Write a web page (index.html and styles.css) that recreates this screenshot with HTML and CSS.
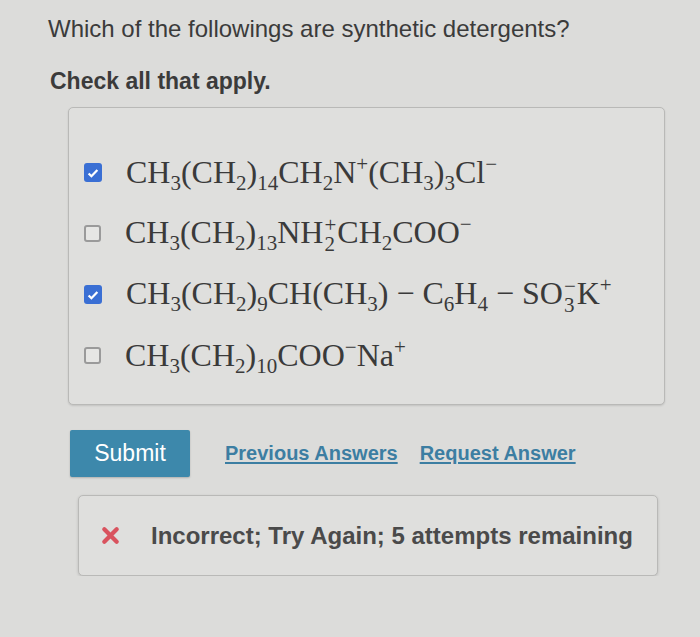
FILE: index.html
```html
<!DOCTYPE html>
<html lang="en">
<head>
    <meta charset="UTF-8">
    <title>Question</title>
    <link rel="stylesheet" href="styles.css">
</head>
<body>
    <div class="page">
        <p class="question">Which of the followings are synthetic detergents?</p>
        <p class="instruction">Check all that apply.</p>

        <div class="answers">
            <label class="answer">
                <span class="box checked"><svg viewBox="0 0 16 16" width="14" height="14"><path d="M3 8.5l3.2 3.2L13 4.5" fill="none" stroke="#fff" stroke-width="2.6"/></svg></span>
                <span class="formula">CH<sub>3</sub>(CH<sub>2</sub>)<sub>14</sub>CH<sub>2</sub>N<sup>+</sup>(CH<sub>3</sub>)<sub>3</sub>Cl<sup>&minus;</sup></span>
            </label>
            <label class="answer">
                <span class="box"></span>
                <span class="formula">CH<sub>3</sub>(CH<sub>2</sub>)<sub>13</sub>NH<span class="stack"><span>+</span><span>2</span></span>CH<sub>2</sub>COO<sup>&minus;</sup></span>
            </label>
            <label class="answer">
                <span class="box checked"><svg viewBox="0 0 16 16" width="14" height="14"><path d="M3 8.5l3.2 3.2L13 4.5" fill="none" stroke="#fff" stroke-width="2.6"/></svg></span>
                <span class="formula">CH<sub>3</sub>(CH<sub>2</sub>)<sub>9</sub>CH(CH<sub>3</sub>) &minus; C<sub>6</sub>H<sub>4</sub> &minus; SO<span class="stack"><span>&minus;</span><span>3</span></span>K<sup>+</sup></span>
            </label>
            <label class="answer">
                <span class="box"></span>
                <span class="formula">CH<sub>3</sub>(CH<sub>2</sub>)<sub>10</sub>COO<sup>&minus;</sup>Na<sup>+</sup></span>
            </label>
        </div>

        <div class="actions">
            <button class="submit">Submit</button>
            <a href="#" class="link">Previous Answers</a>
            <a href="#" class="link">Request Answer</a>
        </div>

        <div class="feedback">
            <svg class="cross" viewBox="0 0 20 20" width="19" height="19"><path d="M3.5 3.5l13 13M16.5 3.5l-13 13" stroke="#d9535e" stroke-width="4.5" stroke-linecap="round"/></svg>
            <span>Incorrect; Try Again; 5 attempts remaining</span>
        </div>
    </div>
</body>
</html>
```

FILE: styles.css
```css
body {
    margin: 0;
    background-color: #dcdcda;
    font-family: "Liberation Sans", Arial, sans-serif;
    color: #3b3b3b;
}
.page {
    padding: 14px 0 0 48px;
    width: 620px;
}
.question {
    margin: 0;
    font-size: 24px;
    line-height: 30px;
}
.instruction {
    margin: 22px 0 0 2px;
    font-size: 23px;
    font-weight: bold;
    line-height: 30px;
}
.answers {
    margin: 11px 0 0 20px;
    width: 597px;
    height: 298px;
    box-sizing: border-box;
    border: 1px solid #b9b9b7;
    border-radius: 5px;
    background-color: #dfdfdd;
    box-shadow: 0 1px 2px rgba(0,0,0,0.12);
    padding: 34px 0 0 15px;
}
.answer {
    display: flex;
    align-items: center;
    gap: 24px;
    height: 61px;
}
.box {
    width: 17px;
    height: 17px;
    box-sizing: border-box;
    border: 2px solid #9a9a9a;
    border-radius: 3px;
    background: #e6e6e4;
    display: flex;
    align-items: center;
    justify-content: center;
    flex-shrink: 0;
}
.box.checked {
    width: 18px;
    height: 19px;
    border: none;
    background: #3a6fd4;
}
.formula {
    font-family: "Liberation Serif", "Times New Roman", serif;
    font-size: 32px;
    color: #3a3a3a;
    white-space: nowrap;
}
.formula sub, .formula sup {
    font-size: 21px;
    line-height: 0;
}
.stack {
    display: inline-block;
    font-size: 21px;
    line-height: 19px;
    vertical-align: -8px;
    margin: 0 1px;
}
.stack span {
    display: block;
}
.actions {
    display: flex;
    align-items: center;
    margin: 25px 0 0 22px;
}
.submit {
    background-color: #3d88ab;
    color: #fff;
    border: none;
    border-radius: 2px;
    font-family: "Liberation Sans", Arial, sans-serif;
    font-size: 23px;
    width: 120px;
    height: 47px;
    margin-right: 35px;
    box-shadow: 0 1px 2px rgba(0,0,0,0.2);
}
.link {
    color: #3c7ea2;
    font-weight: bold;
    font-size: 20px;
    margin-right: 22px;
    text-decoration: underline;
    text-underline-offset: 2px;
}
.feedback {
    display: flex;
    align-items: center;
    margin: 18px 0 0 30px;
    width: 580px;
    height: 81px;
    box-sizing: border-box;
    border: 1px solid #b9b9b7;
    border-radius: 5px;
    background-color: #dfdfdd;
    box-shadow: 0 1px 3px rgba(0,0,0,0.15);
    padding-left: 22px;
    font-size: 24px;
    font-weight: bold;
    color: #4a4a4a;
}
.cross {
    margin-right: 31px;
}
```
